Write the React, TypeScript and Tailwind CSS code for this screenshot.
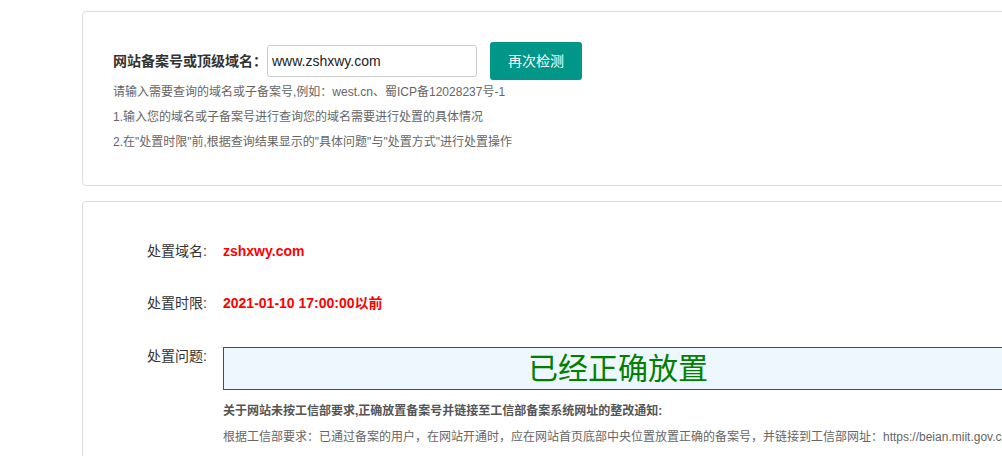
import React from 'react';

const font = { fontFamily: '"Liberation Sans", "Noto Sans CJK SC", sans-serif' };

const App = () => {
    return (
        <div className="w-[1002px] h-[456px] overflow-hidden bg-white" style={font}>
            <div className="ml-[82px] w-[1000px] pt-[11px]">
                {/* query panel */}
                <div className="h-[175px] border border-[#dddddd] rounded-[4px] pl-[30px] pt-[30px]">
                    <div className="flex items-center h-[38px]">
                        <span className="text-[14px] font-bold text-[#333]">网站备案号或顶级域名：</span>
                        <input
                            className="w-[210px] h-[32px] border border-[#cccccc] rounded-[3px] px-[4px] text-[14px] text-[#222] outline-none"
                            defaultValue="www.zshxwy.com"
                        />
                        <button className="ml-[13px] w-[92px] h-[38px] rounded-[3px] bg-[#009688] text-white text-[14px]">
                            再次检测
                        </button>
                    </div>
                    <div className="mt-0 text-[12px] leading-[25px] text-[#666]">
                        <p>请输入需要查询的域名或子备案号,例如：west.cn、蜀ICP备12028237号-1</p>
                        <p>1.输入您的域名或子备案号进行查询您的域名需要进行处置的具体情况</p>
                        <p>2.在"处置时限"前,根据查询结果显示的"具体问题"与"处置方式"进行处置操作</p>
                    </div>
                </div>

                {/* result panel */}
                <div className="mt-[15px] h-[300px] border border-[#dddddd] rounded-[4px] pt-[39px]">
                    <div className="flex items-center leading-[20px]">
                        <span className="w-[124px] text-right text-[14px] text-[#333]">处置域名:</span>
                        <span className="ml-[16px] text-[14px] font-bold text-[#ff0000]">zshxwy.com</span>
                    </div>
                    <div className="mt-[32px] flex items-center leading-[20px]">
                        <span className="w-[124px] text-right text-[14px] text-[#333]">处置时限:</span>
                        <span className="ml-[16px] text-[14px] font-bold text-[#ff0000]">2021-01-10 17:00:00以前</span>
                    </div>
                    <div className="mt-[33px] flex items-start">
                        <span className="w-[124px] text-right text-[14px] leading-[20px] text-[#333]">处置问题:</span>
                        <div className="ml-[16px] w-[790px]">
                            <div className="mt-[1px] h-[43px] border border-[#008000] bg-[#eef6fe] text-center text-[30px] leading-[41px] text-[#008000]">
                                已经正确放置
                            </div>
                            <div className="mt-[8px] text-[12px] leading-[26px]">
                                <p className="font-bold text-[#555]">
                                    关于网站未按工信部要求,正确放置备案号并链接至工信部备案系统网址的整改通知:
                                </p>
                                <p className="text-[#666] whitespace-nowrap">
                                    根据工信部要求：已通过备案的用户，在网站开通时，应在网站首页底部中央位置放置正确的备案号，并链接到工信部网址：https://beian.miit.gov.cn
                                </p>
                                <p className="text-[#666]">微信小程序请忽略</p>
                            </div>
                        </div>
                    </div>
                </div>
            </div>
        </div>
    );
};

export default App;
